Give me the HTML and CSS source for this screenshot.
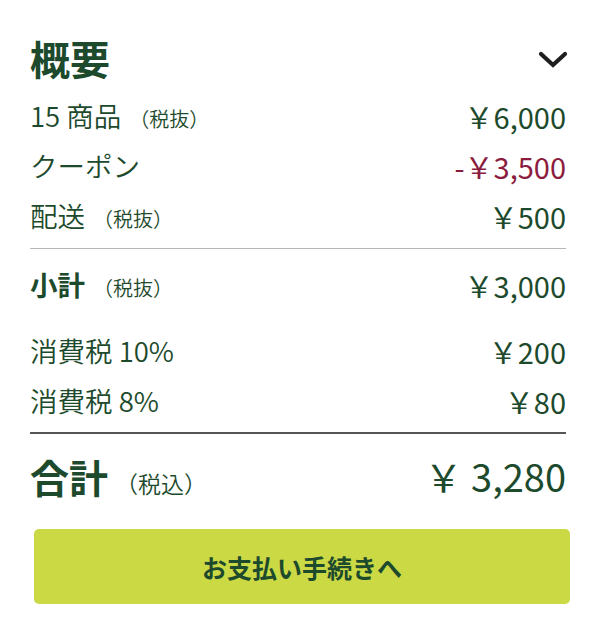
FILE: index.html
```html
<!DOCTYPE html>
<html lang="ja">
<head>
<meta charset="utf-8">
<title>概要</title>
<link rel="stylesheet" href="styles.css">
</head>
<body>
<section class="summary">
  <header class="summary-head">
    <h2 class="summary-title">概要</h2>
    <button class="toggle" aria-label="折りたたむ">
      <svg width="30" height="20" viewBox="0 0 30 20"><polyline points="3,4 15,15 27,4" fill="none" stroke="#1f1f1f" stroke-width="4.2" stroke-linecap="round" stroke-linejoin="miter"/></svg>
    </button>
  </header>

  <div class="group">
    <div class="row"><span class="label">15 商品<small class="note">（税抜）</small></span><span class="amount">￥6,000</span></div>
    <div class="row"><span class="label">クーポン</span><span class="amount discount">-￥3,500</span></div>
    <div class="row"><span class="label">配送<small class="note">（税抜）</small></span><span class="amount">￥500</span></div>
  </div>

  <hr class="rule light">

  <div class="row subtotal"><span class="label strong">小計<small class="note">（税抜）</small></span><span class="amount">￥3,000</span></div>

  <div class="group tax">
    <div class="row"><span class="label">消費税 10%</span><span class="amount">￥200</span></div>
    <div class="row"><span class="label">消費税 8%</span><span class="amount">￥80</span></div>
  </div>

  <hr class="rule dark">

  <div class="row total"><span class="label"><span class="total-word">合計</span><small class="note">（税込）</small></span><span class="amount">￥ 3,280</span></div>

  <button class="checkout">お支払い手続きへ</button>
</section>
</body>
</html>
```

FILE: styles.css
```css
* { box-sizing: border-box; }

body {
  margin: 0;
  background: #ffffff;
  font-family: "Noto Sans CJK JP", "Noto Sans", sans-serif;
  font-weight: 350;
  color: #1d4a2c;
}

.summary {
  width: 536px;
  margin-left: 30px;
  padding-top: 27px;
}

.summary-head {
  height: 64px;
  display: flex;
  align-items: center;
  justify-content: space-between;
  padding-bottom: 2px;
}

.summary-title {
  margin: 0;
  font-size: 40px;
  font-weight: 700;
  line-height: 1;
  color: #1d4a2c;
}

.toggle {
  border: 0;
  background: none;
  padding: 0;
  margin: 3px -2px 0 0;
  display: flex;
}

.row {
  height: 50px;
  display: flex;
  align-items: center;
  justify-content: space-between;
  line-height: 1;
}

.label {
  display: flex;
  align-items: baseline;
  font-size: 27.5px;
}

.note {
  font-size: 20px;
  margin-left: 8px;
}

.amount { font-size: 29px; font-weight: 400; }

.discount { color: #8c1c3e; }

.rule {
  border: 0;
  margin: 0;
  height: 1px;
}
.rule.light { background: #b5b5b5; margin-top: 7px; }
.rule.dark { background: #555555; height: 2px; margin-top: 6px; }

.subtotal { margin-top: 11px; }
.strong { font-weight: 700; }
.strong .note { font-weight: 350; margin-left: 8px; }

.tax { margin-top: 16px; }

.total { height: 60px; margin-top: 12px; }
.total-word { font-size: 39px; font-weight: 700; }
.total .note { font-size: 23px; margin-left: 7px; }
.total .amount { font-size: 38px; }

.checkout {
  display: block;
  width: 536px;
  height: 75px;
  margin: 23px 0 0 4px;
  border: 0;
  border-radius: 5px;
  background: #cbd945;
  color: #1d4a2c;
  font-family: inherit;
  font-size: 25px;
  font-weight: 700;
}
```
